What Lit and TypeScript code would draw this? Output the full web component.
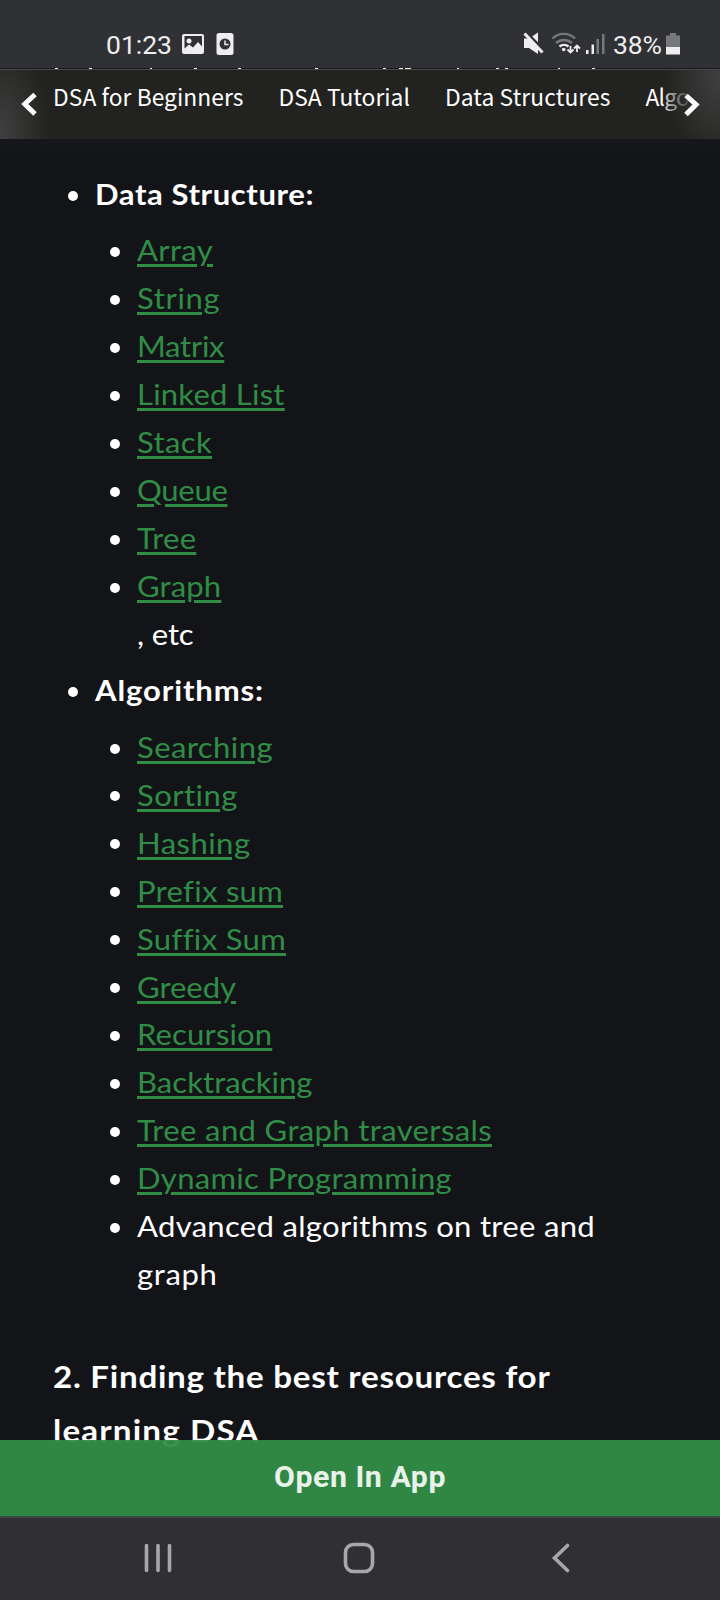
import { LitElement, html, css, svg } from "lit";
import { customElement, property } from "lit/decorators.js";

/** A single line of text whose tracking is adjusted to a given advance width. */
@customElement("fit-text")
class FitText extends LitElement {
  @property({ type: Number }) width = 0;
  @property() text = "";
  static styles = css`
    :host { display: inline; white-space: pre; }
  `;
  render() {
    return html`<span class="t">${this.text}</span>`;
  }
  updated() {
    const el = this.renderRoot.querySelector(".t") as HTMLElement;
    const at = (spacing: number) => {
      el.style.letterSpacing = `${spacing}px`;
      return el.getBoundingClientRect().width;
    };
    const w0 = at(0.5);
    const w1 = at(1.5);
    if (this.width && w1 > w0) at(0.5 + (this.width - w0) / (w1 - w0));
  }
}

type Item = { text: string; w: number; link?: boolean; more?: { text: string; w: number } };

const structures: Item[] = [
  { text: "Array", w: 76, link: true },
  { text: "String", w: 83.3, link: true },
  { text: "Matrix", w: 87.3, link: true },
  { text: "Linked List", w: 147.7, link: true },
  { text: "Stack", w: 75, link: true },
  { text: "Queue", w: 90.5, link: true },
  { text: "Tree", w: 59.3, link: true },
  { text: "Graph", w: 84.3, link: true, more: { text: ", etc", w: 56.5 } },
];

const algorithms: Item[] = [
  { text: "Searching", w: 136, link: true },
  { text: "Sorting", w: 100.8, link: true },
  { text: "Hashing", w: 113.5, link: true },
  { text: "Prefix sum", w: 146, link: true },
  { text: "Suffix Sum", w: 149, link: true },
  { text: "Greedy", w: 99, link: true },
  { text: "Recursion", w: 135.3, link: true },
  { text: "Backtracking", w: 175.5, link: true },
  { text: "Tree and Graph traversals", w: 355, link: true },
  { text: "Dynamic Programming", w: 315, link: true },
  { text: "Advanced algorithms on tree and", w: 458, more: { text: "graph", w: 80.5 } },
];

const tabs = [
  { text: "DSA for Beginners", w: 190.5 },
  { text: "DSA Tutorial", w: 131.5 },
  { text: "Data Structures", w: 165.5 },
  { text: "Algorithms", w: 108 },
];

/* Ascender tips of the article line that scrolls under the status bar: [x, width]. */
const tips = [
  [55, 3], [89, 3], [150, 2], [194, 3], [238, 3], [315, 3], [383, 3], [399, 4], [405, 6],
  [457, 2], [496, 3], [505, 3], [558, 2], [592, 3],
];

@customElement("app-root")
class AppRoot extends LitElement {
  static styles = css`
    :host {
      display: flex;
      flex-direction: column;
      height: 1600px;
      width: 720px;
      overflow: hidden;
      background: #131418;
      color: #fff;
      font-family: Lato, "Open Sans", sans-serif;
    }
    svg { display: block; }
    .status {
      flex: none;
      height: 68px;
      background: #303135;
    }
    .status text { font-family: Roboto, sans-serif; }
    .seam {
      flex: none;
      height: 2px;
    }
    .nav {
      flex: none;
      height: 69px;
      display: grid;
      background: #222220;
      overflow: hidden;
    }
    .nav > * { grid-area: 1 / 1; }
    .tabs {
      display: flex;
      gap: 35px;
      padding: 12px 0 0 53px;
      font: 400 22.8px/30px "Noto Sans CJK JP", "Noto Sans", sans-serif;
      white-space: nowrap;
    }
    .main {
      flex: 1;
      min-height: 0;
      overflow: hidden;
      padding: 31px 52px 0;
      background: linear-gradient(#15171a, #131418 24px);
    }
    ul { list-style: none; margin: 0; padding: 0; }
    li {
      display: grid;
      grid-template-columns: 42.700px 1fr;
      font-size: 29px;
      line-height: 48px;
    }
    li::before {
      content: "";
      width: 10px;
      height: 10px;
      border-radius: 50%;
      background: #fff;
      margin: 20.500px 0 0 16px;
    }
    .inner { padding-left: 42px; }
    .first { margin-top: 8px; }
    .second { margin-top: 9px; }
    .second li { line-height: 47.900px; }
    .head { font-weight: 700; }
    .gap { margin-top: 8px; }
    .link {
      color: #308d46;
      text-decoration: underline;
      text-decoration-thickness: 3px;
      text-underline-offset: 2.500px;
    }
    .line {
      display: block;
      transform: scaleX(1.07);
      transform-origin: left;
      white-space: nowrap;
    }
    h3 {
      margin: 52.500px 0 0 0.700px;
      font-size: 31px;
      line-height: 53.700px;
      font-weight: 700;
    }
    .open {
      flex: none;
      position: relative;
      height: 76px;
      margin-top: -76px;
      display: grid;
      place-items: start center;
      background: rgba(48, 141, 70, 0.95);
      color: #e9f2ea;
      font: 700 30.300px/73px Roboto, sans-serif;
    }
    .bar {
      flex: none;
      height: 84px;
      background: #303034;
    }
  `;

  private line(text: string, w: number, link = false) {
    return html`<span class="line"><span class=${link ? "link" : ""}><fit-text .text=${text} .width=${w}></fit-text></span></span>`;
  }

  private item(i: Item) {
    return html`<li>
      <div>${this.line(i.text, i.w, i.link)}${i.more ? this.line(i.more.text, i.more.w) : ""}</div>
    </li>`;
  }

  render() {
    return html`
      <svg class="status" width="720" height="68" viewBox="0 0 720 68">
        <g fill="#eee">
          <text x="106" y="54.400" font-size="26.500" textLength="66">01:23</text>
          <path fill-rule="evenodd" d="M184 34h18a2 2 0 0 1 2 2v16a2 2 0 0 1-2 2h-18a2 2 0 0 1-2-2V36a2 2 0 0 1 2-2zM184.500 36v12.500l4.500-4 4 3 5-5.500 4 4.500V36z"/>
          <circle cx="189" cy="41" r="2.500"/>
          <rect x="216.500" y="33" width="17" height="22" rx="2.500"/>
          <circle cx="225" cy="44" r="5.500" fill="#303135"/>
          <path d="M225 40.500v4h3.500" stroke="#eee" stroke-width="1.500" fill="none"/>
          <path d="M524 38.500h5l9-6V54l-9-6h-5z"/>
          <path d="M524 30.500l21 21.500" stroke="#303135" stroke-width="3.500"/>
          <path d="M524.500 33.500l18 19" stroke="#eee" stroke-width="3"/>
        </g>
        <g fill="none" stroke-width="2.400">
          <path d="M552.500 38.500a16 16 0 0 1 22.500 0" stroke="#77787b"/>
          <path d="M556 43a12 12 0 0 1 16 0" stroke="#77787b"/>
          <path d="M559.500 46.500a7 7 0 0 1 9 0" stroke="#eee"/>
          <path d="M570.500 46v6m-3-2.500l3 3 3-3M577 52v-6m-3 2.500l3-3 3 3" stroke="#eee" stroke-width="1.800"/>
        </g>
        <circle cx="563.700" cy="49.500" r="1.800" fill="#eee"/>
        <path d="M586 50h2.500v4H586zM591.500 44.500h2.500V54h-2.500z" fill="#eee"/>
        <path d="M596.500 39h2.500v15h-2.500zM602 34h2.500v20H602z" fill="#77787b"/>
        <text x="613" y="54.400" font-size="26.500" textLength="49" fill="#eee">38%</text>
        <path d="M670 33h6v2.500h4V47h-14V35.500h4z" fill="#77787b"/>
        <path d="M666 47h14v7.500h-14z" fill="#eee"/>
      </svg>
      <svg class="seam" width="720" height="2" viewBox="0 0 720 2" shape-rendering="crispEdges">
        <rect width="720" height="1" fill="#17181b"/>
        ${tips.map(([x, w]) => svg`<rect x=${x} y="0" width=${w} height="1" fill="#eee"/>`)}
        <rect y="1" width="720" height="1" fill="#4a4b4b"/>
      </svg>
      <div class="nav">
        <div class="tabs">${tabs.map((t) => html`<span><fit-text .text=${t.text} .width=${t.w}></fit-text></span>`)}</div>
        <svg width="720" height="69" viewBox="0 70 720 69">
          <defs>
            <radialGradient id="l" gradientUnits="userSpaceOnUse" cx="0" cy="0" r="1" gradientTransform="translate(0 136) scale(50 100)">
              <stop offset="0" stop-color="#404040"/><stop offset="1" stop-color="#404040" stop-opacity="0"/>
            </radialGradient>
            <linearGradient id="r" x1="665" x2="697" y1="0" y2="0" gradientUnits="userSpaceOnUse">
              <stop offset="0" stop-color="#222220" stop-opacity=".2"/><stop offset="1" stop-color="#222220"/>
            </linearGradient>
            <radialGradient id="rr" gradientUnits="userSpaceOnUse" cx="0" cy="0" r="1" gradientTransform="translate(720 76) scale(56 90)">
              <stop offset="0" stop-color="#404040"/><stop offset="1" stop-color="#404040" stop-opacity="0"/>
            </radialGradient>
          </defs>
          <rect x="0" y="70" width="56" height="69" fill="url(#l)"/>
          <rect x="665" y="70" width="55" height="69" fill="url(#r)"/>
          <rect x="688" y="70" width="32" height="69" fill="#222220"/>
          <rect x="664" y="70" width="56" height="69" fill="url(#rr)"/>
          <path d="M35 94.500L24.800 104l10.200 10" fill="none" stroke="#fff" stroke-width="5"/>
          <path d="M686 95.500l10 9-10 10" fill="none" stroke="#fff" stroke-width="5"/>
        </svg>
      </div>
      <div class="main">
        <ul>
          <li class="head"><div>${this.line("Data Structure:", 219)}</div></li>
        </ul>
        <ul class="inner first">${structures.map((i) => this.item(i))}</ul>
        <ul class="gap">
          <li class="head"><div>${this.line("Algorithms:", 169)}</div></li>
        </ul>
        <ul class="inner second">${algorithms.map((i) => this.item(i))}</ul>
        <h3>${this.line("2. Finding the best resources for", 497.5)}${this.line("learning DSA", 206.5)}</h3>
      </div>
      <div class="open"><fit-text .text=${"Open In App"} .width=${172}></fit-text></div>
      <svg class="bar" width="720" height="84" viewBox="0 1516 720 84">
        <rect y="1516" width="720" height="2" fill="#3d4a42"/>
        <g fill="none" stroke="#a7a7a8" stroke-width="3.600" stroke-linecap="round">
          <path d="M146.500 1545.500v25M158 1545.500v25M169.500 1545.500v25"/>
          <rect x="345.500" y="1544.500" width="27" height="27" rx="8"/>
          <path d="M567.500 1545.500l-13 12.500 13 12.500"/>
        </g>
      </svg>
    `;
  }
}
